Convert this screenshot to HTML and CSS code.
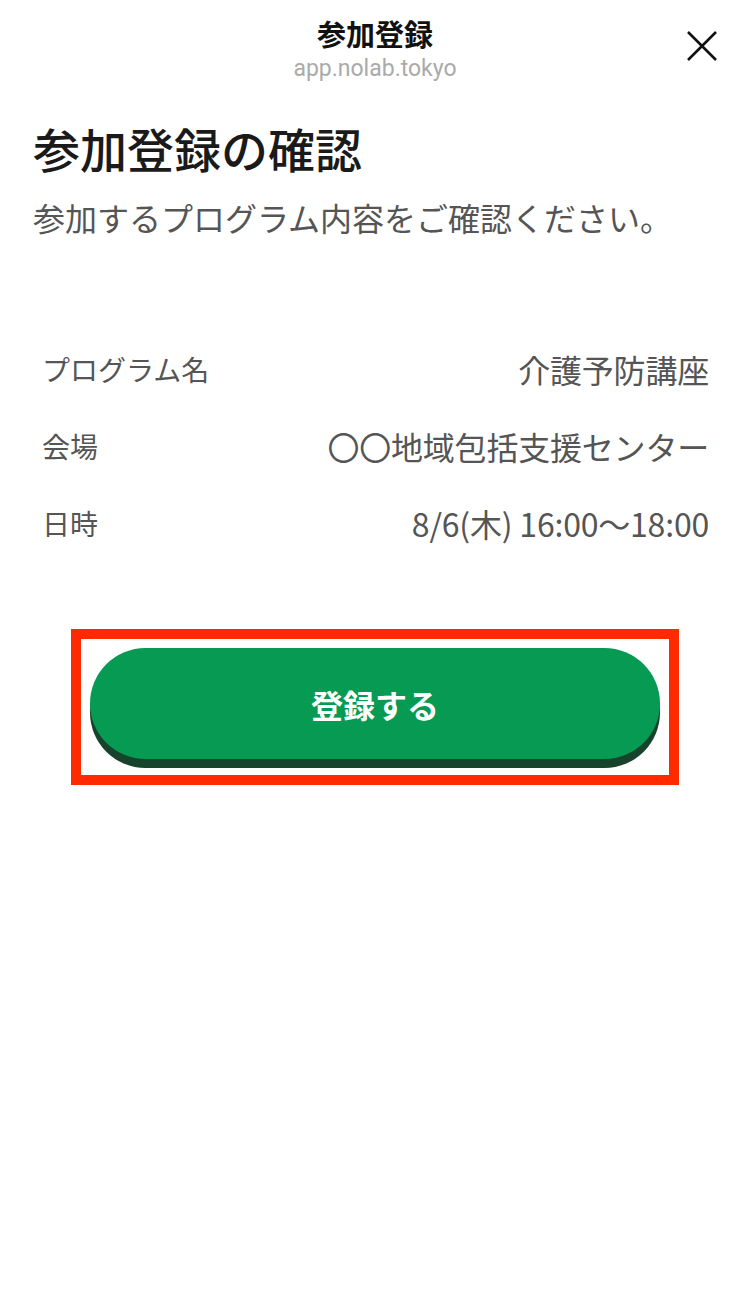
FILE: index.html
```html
<!DOCTYPE html>
<html lang="ja">
<head>
<meta charset="utf-8">
<link rel="stylesheet" href="styles.css">
</head>
<body>
<div class="page">
  <header class="topbar">
    <div class="topbar-titles">
      <div class="topbar-title">参加登録</div>
      <div class="topbar-url">app.nolab.tokyo</div>
    </div>
    <button class="close" aria-label="閉じる">
      <svg width="32" height="32" viewBox="0 0 32 32"><path d="M2 2 L30 30 M30 2 L2 30" stroke="#111" stroke-width="2.6" fill="none"/></svg>
    </button>
  </header>
  <main class="content">
    <h1 class="heading">参加登録の確認</h1>
    <p class="lead">参加するプログラム内容をご確認ください。</p>
    <dl class="details">
      <div class="row"><dt>プログラム名</dt><dd>介護予防講座</dd></div>
      <div class="row"><dt>会場</dt><dd>〇〇地域包括支援センター</dd></div>
      <div class="row"><dt>日時</dt><dd>8/6(木) 16:00〜18:00</dd></div>
    </dl>
    <div class="highlight">
      <button class="submit">登録する</button>
    </div>
  </main>
</div>
</body>
</html>
```
FILE: styles.css
```css
html, body {
  margin: 0;
  padding: 0;
  background: #fff;
}
body {
  font-family: "Noto Sans CJK JP", "Noto Sans", sans-serif;
  color: #222;
}
.page {
  width: 750px;
  min-height: 1297px;
}
.topbar {
  position: relative;
  height: 96px;
  display: flex;
  justify-content: center;
}
.topbar-titles {
  padding-top: 14px;
  text-align: center;
}
.topbar-title {
  font-size: 29px;
  font-weight: 700;
  line-height: 38px;
  color: #111;
}
.topbar-url {
  font-family: Roboto, "Noto Sans", sans-serif;
  font-size: 23px;
  line-height: 34px;
  color: #aaa;
}
.close {
  position: absolute;
  right: 31px;
  top: 29px;
  width: 34px;
  height: 34px;
  padding: 1px;
  border: 0;
  background: none;
}
.content {
  padding: 0 33px;
}
.heading {
  margin: 18px 0 0;
  font-size: 47px;
  font-weight: 500;
  line-height: 68px;
  color: #1a1a1a;
}
.lead {
  margin: 0;
  font-size: 32px;
  line-height: 70px;
  color: #555;
  white-space: nowrap;
}
.details {
  margin: 78px 0 0;
  padding: 0 8px 0 9px;
}
.row {
  display: flex;
  justify-content: space-between;
  align-items: center;
  height: 77px;
}
.row dt {
  font-size: 28px;
  color: #555;
}
.row dd {
  margin: 0;
  font-size: 32px;
  color: #555;
  letter-spacing: -0.2px;
}
.highlight {
  margin: 68px 38px 0 38px;
  border: 10px solid #ff2a00;
  padding: 9px 9px 16px 9px;
}
.submit {
  display: block;
  width: 100%;
  height: 111px;
  border: 0;
  border-radius: 56px;
  background: #069a52;
  box-shadow: 0 9px 0 #17422c;
  color: #fff;
  font-family: "Noto Sans CJK JP", sans-serif;
  font-size: 32px;
  font-weight: 700;
}
```
